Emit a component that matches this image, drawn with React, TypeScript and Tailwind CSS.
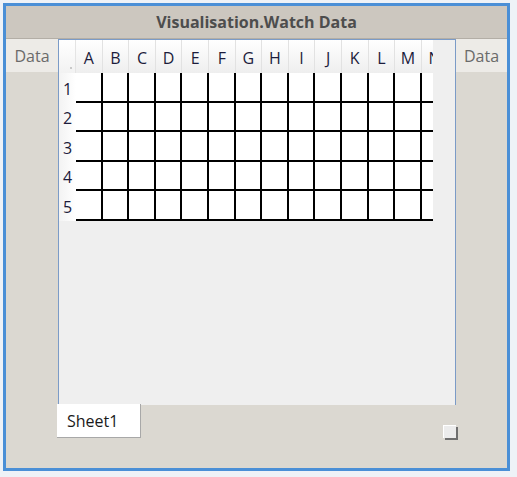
const columns = ["A", "B", "C", "D", "E", "F", "G", "H", "I", "J", "K", "L", "M", "N"]
const rows = [1, 2, 3, 4, 5]

function SideTab() {
  return (
    <div className="h-[33px] bg-[#edebe7] flex items-center justify-center text-[16px] text-[#6a6a6a]">
      Data
    </div>
  )
}

function Sheet() {
  return (
    <div className="w-[374px] overflow-hidden">
      {/* header row */}
      <div className="flex h-[33px]">
        <div className="w-[17px] shrink-0 bg-gradient-to-b from-white to-[#f2f2f2] border-r border-[#e4e4e4] relative">
          <span className="absolute right-[3px] bottom-[4px] w-[2px] h-[2px] bg-[#c8c8c8]" />
        </div>
        {columns.map((c) => (
          <div
            key={c}
            className="w-[26.6px] shrink-0 bg-gradient-to-b from-white to-[#eeeeee] border-r border-[#e2e2e2] flex items-center justify-center pt-[3px] text-[16px] text-[#1c1c3c]"
          >
            {c}
          </div>
        ))}
      </div>
      {/* body */}
      {rows.map((r) => (
        <div key={r} className="flex h-[29.5px]">
          <div className="w-[17px] shrink-0 bg-gradient-to-r from-[#f3f3f3] to-white flex items-center justify-center text-[16px] text-[#1c1c3c] pt-[2px]">
            {r}
          </div>
          {columns.map((c) => (
            <div key={c} className="w-[26.6px] shrink-0 bg-white border-r-2 border-b-2 border-black" />
          ))}
        </div>
      ))}
    </div>
  )
}

export default function App() {
  return (
    <div className="w-[517px] h-[477px] bg-[#eef2f7] pt-[3px] pl-[3px] font-['Open_Sans',sans-serif]">
      <div className="w-[507px] h-[468px] border-[3px] border-[#4a8fd6] bg-[#dbd8d1] flex flex-col">
        {/* title bar */}
        <div className="h-[33px] shrink-0 bg-[#ccc7bf] border-b border-[#b3aea6] flex items-center justify-center text-[16px] font-bold text-[#4d4d4d]">
          Visualisation.Watch Data
        </div>

        <div className="flex h-[366px] shrink-0">
          <div className="w-[52px] shrink-0">
            <SideTab />
          </div>
          <div className="w-[398px] shrink-0 border-l border-t border-r border-[#7b9bc7] bg-[#efefef]">
            <Sheet />
          </div>
          <div className="flex-1">
            <SideTab />
          </div>
        </div>

        <div className="flex-1 flex">
          <div className="ml-[51px] -mt-px w-[84px] h-[34px] bg-white border-r border-b border-[#a8a8a8] flex items-center pl-[10px] text-[16px] text-[#1a1a1a]">
            Sheet1
          </div>
          <div className="ml-[302px] mt-[20px] w-[13px] h-[13px] bg-[#ececec] border-t border-l border-white shadow-[2px_2px_0_#6f6f6f]" />
        </div>
      </div>
    </div>
  )
}
